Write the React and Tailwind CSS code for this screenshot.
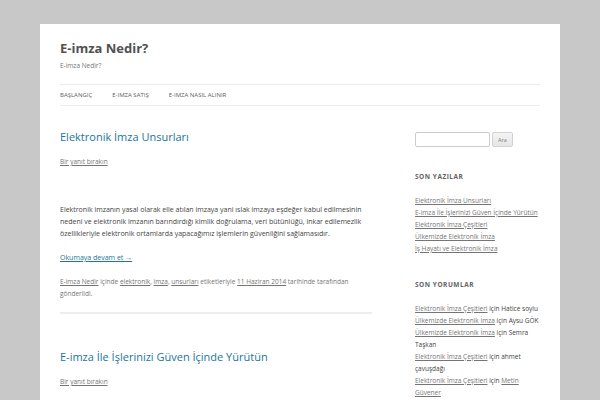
export default function App() {
  const link = "text-[#757575] underline";
  return (
    <div className="h-[400px] overflow-hidden bg-[#c8c8c8] px-[40px] pt-[24px] font-['Open_Sans',sans-serif] text-[#444]">
      <div className="bg-white px-[20px] pb-[40px]">
        <header className="pt-[12px] pb-[12px]">
          <h1 className="text-[13px] font-bold leading-[24px] text-[#515151]">E-imza Nedir?</h1>
          <h2 className="text-[6.5px] leading-[12px] text-[#757575]">E-imza Nedir?</h2>
          <nav className="mt-[12px] border-y border-[#ededed]">
            <ul className="flex gap-[20px] text-[6px] uppercase leading-[20px] text-[#5e5e5e]">
              <li>BAŞLANGIÇ</li>
              <li>E-IMZA SATIŞ</li>
              <li>E-IMZA NASIL ALINIR</li>
            </ul>
          </nav>
        </header>
        <div className="flex justify-between pt-[12px]">
          <main className="w-[312px]">
            <article className="border-b-2 border-[#ededed] pb-[12px] mb-[36px]">
              <div className="mb-[12px]">
                <h2 className="text-[11px] leading-[14px] text-[#21759b]">Elektronik İmza Unsurları</h2>
                <div className="mt-[12px] text-[6.5px] leading-[12px]"><span className={link}>Bir yanıt bırakın</span></div>
              </div>
              <div className="text-[7px] leading-[12px]">
                <p className="mb-[12px]">&nbsp;</p>
                <p className="mb-[12px]">
                  Elektronik imzanın yasal olarak elle atılan imzaya yani ıslak imzaya eşdeğer kabul edilmesinin nedeni ve elektronik imzanın barındırdığı kimlik doğrulama, veri bütünlüğü, inkar edilemezlik özellikleriyle elektronik ortamlarda yapacağımız işlemlerin güvenliğini sağlamasıdır.
                </p>
                <p className="mb-[12px]"><span className="text-[#21759b] underline">Okumaya devam et →</span></p>
              </div>
              <footer className="text-[6.5px] leading-[12px] text-[#757575]">
                <span className={link}>E-imza Nedir</span> içinde <span className={link}>elektronik</span>, <span className={link}>imza</span>, <span className={link}>unsurları</span> etiketleriyle <span className={link}>11 Haziran 2014</span> tarihinde tarafından gönderildi.
              </footer>
            </article>
            <article>
              <div className="mb-[12px]">
                <h2 className="text-[11px] leading-[14px] text-[#21759b]">E-imza İle İşlerinizi Güven İçinde Yürütün</h2>
                <div className="mt-[12px] text-[6.5px] leading-[12px]"><span className={link}>Bir yanıt bırakın</span></div>
              </div>
            </article>
          </main>
          <aside className="w-[125px] text-[6.5px] leading-[12px]">
            <div className="mb-[24px] flex items-center gap-[2px] pt-[2px]">
              <div className="h-[15px] w-[75px] rounded-[2px] border border-[#cccccc] bg-white"></div>
              <div className="flex h-[15px] w-[21px] items-center justify-center rounded-[2px] border border-[#d2d2d2] bg-gradient-to-b from-[#f4f4f4] to-[#e6e6e6] text-[5.5px] text-[#7c7c7c]">Ara</div>
            </div>
            <div className="mb-[24px]">
              <h3 className="mb-[12px] text-[6.5px] font-bold uppercase leading-[12px] tracking-[0.08em] text-[#636363]">SON YAZILAR</h3>
              <ul>
                <li><span className={link}>Elektronik İmza Unsurları</span></li>
                <li><span className={link}>E-imza İle İşlerinizi Güven İçinde Yürütün</span></li>
                <li><span className={link}>Elektronik İmza Çeşitleri</span></li>
                <li><span className={link}>Ülkemizde Elektronik İmza</span></li>
                <li><span className={link}>İş Hayatı ve Elektronik İmza</span></li>
              </ul>
            </div>
            <div>
              <h3 className="mb-[12px] text-[6.5px] font-bold uppercase leading-[12px] tracking-[0.08em] text-[#636363]">SON YORUMLAR</h3>
              <ul>
                <li><span className={link}>Elektronik İmza Çeşitleri</span> için Hatice soylu</li>
                <li><span className={link}>Ülkemizde Elektronik İmza</span> için Aysu GÖK</li>
                <li><span className={link}>Ülkemizde Elektronik İmza</span> için Semra Taşkan</li>
                <li><span className={link}>Elektronik İmza Çeşitleri</span> için ahmet çavuşdağı</li>
                <li><span className={link}>Elektronik İmza Çeşitleri</span> için <span className={link}>Metin Güvener</span></li>
              </ul>
            </div>
          </aside>
        </div>
      </div>
    </div>
  );
}
